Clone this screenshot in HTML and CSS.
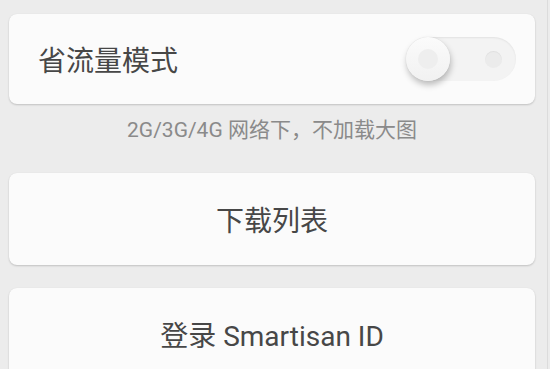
FILE: index.html
```html
<!DOCTYPE html>
<html lang="zh-CN">
<head>
  <meta charset="UTF-8">
  <meta name="viewport" content="width=device-width, initial-scale=1.0">
  <title>设置</title>
  <link rel="stylesheet" href="styles.css">
</head>
<body>
<div class="settings">
  <div class="card row">
    <span class="row-title">省流量模式</span>
    <div class="switch">
      <span class="switch-dot"></span>
      <span class="switch-knob"><span class="knob-dot"></span></span>
    </div>
  </div>
  <p class="hint">2G/3G/4G 网络下，不加载大图</p>

  <div class="card button">下载列表</div>
  <div class="card button login">登录 Smartisan ID</div>
</div>
<div class="scrollbar"></div>
</body>
</html>
```

FILE: styles.css
```css
html, body {
  margin: 0;
  height: 100%;
  overflow: hidden;
}
body {
  font-family: Roboto, "Noto Sans CJK SC", sans-serif;
  background-color: #ececec;
  color: #474747;
}
.settings {
  padding: 14px 15px 0 9px;
}
.card {
  background-color: #fbfbfb;
  border-radius: 8px;
  box-shadow: 0 1px 2px rgba(0,0,0,0.18), 0 0 1px rgba(0,0,0,0.06);
}
.row {
  height: 90px;
  display: flex;
  align-items: center;
  justify-content: space-between;
  padding: 0 19px 0 29px;
  box-sizing: border-box;
}
.row-title {
  font-size: 28px;
}
.switch {
  position: relative;
  width: 110px;
  height: 44px;
  border-radius: 22px;
  background-color: #f3f3f3;
  box-shadow: inset 0 1px 2px rgba(0,0,0,0.07);
}
.switch-dot {
  position: absolute;
  right: 14px;
  top: 14px;
  width: 17px;
  height: 17px;
  border-radius: 50%;
  background-color: #ebebeb;
  box-shadow: inset 0 1px 1px rgba(0,0,0,0.05);
}
.switch-knob {
  position: absolute;
  left: 0;
  top: 0;
  width: 44px;
  height: 44px;
  border-radius: 50%;
  background: linear-gradient(#fbfbfb, #f1f1f1);
  box-shadow: 1px 4px 6px rgba(0,0,0,0.25), 0 0 1px rgba(0,0,0,0.15);
  display: flex;
  align-items: center;
  justify-content: center;
}
.knob-dot {
  width: 20px;
  height: 20px;
  border-radius: 50%;
  background-color: #eeeeee;
}
.hint {
  margin: 0;
  padding: 15px 0 31px;
  line-height: 23px;
  font-size: 21px;
  color: #8a8a8a;
  text-align: center;
}
.button {
  height: 92px;
  display: flex;
  align-items: center;
  justify-content: center;
  font-size: 28px;
}
.login {
  margin-top: 23px;
}
.scrollbar {
  position: absolute;
  right: 2px;
  top: 0;
  width: 1px;
  height: 100%;
  background-color: #dcdcdc;
}
```
